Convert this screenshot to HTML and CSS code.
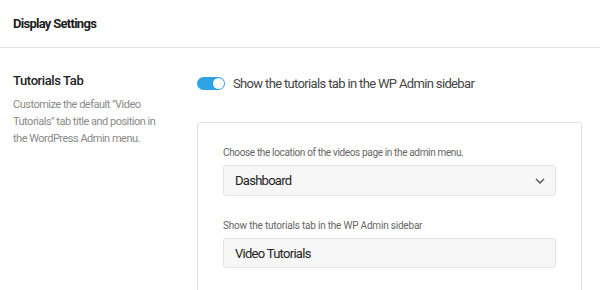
FILE: index.html
```html
<!DOCTYPE html>
<html lang="en">
<head>
  <meta charset="UTF-8" />
  <title>Display Settings</title>
  <link rel="stylesheet" href="styles.css">
</head>
<body>
  <div class="panel">
    <div class="panel-header">
      <h2>Display Settings</h2>
    </div>

    <div class="setting-row">
      <div class="setting-info">
        <h3>Tutorials Tab</h3>
        <p>Customize the default "Video Tutorials" tab title and position in the WordPress Admin menu.</p>
      </div>

      <div class="setting-body">
        <label class="toggle-row">
          <span class="toggle on"><span class="knob"></span></span>
          <span class="toggle-label">Show the tutorials tab in the WP Admin sidebar</span>
        </label>

        <div class="card">
          <div class="field">
            <label>Choose the location of the videos page in the admin menu.</label>
            <div class="select">
              <span>Dashboard</span>
              <svg class="chevron" width="10" height="6" viewBox="0 0 10 6">
                <path d="M1 1l4 4 4-4" fill="none" stroke="#555" stroke-width="1.4" />
              </svg>
            </div>
          </div>

          <div class="field">
            <label>Show the tutorials tab in the WP Admin sidebar</label>
            <input type="text" value="Video Tutorials" />
          </div>
        </div>
      </div>
    </div>
  </div>
</body>
</html>
```

FILE: styles.css
```css
:root {
  --blue: #2ea3e3;
  --border: #e3e3e3;
  --field-bg: #f7f7f7;
}

* {
  margin: 0;
  padding: 0;
  box-sizing: border-box;
}

body {
  font-family: Roboto, Arial, sans-serif;
  letter-spacing: -0.045em;
  background: #fff;
  color: #222;
  height: 100vh;
  overflow: hidden;
}

.panel-header {
  height: 48px;
  padding: 0 13px;
  display: flex;
  align-items: center;
  border-bottom: 1px solid var(--border);
}

h2 {
  font-size: 13px;
  font-weight: 700;
  color: #1d1d1d;
}

.setting-row {
  display: flex;
  padding: 24px 0 0 13px;
}

.setting-info {
  width: 184px;
  flex-shrink: 0;
}

h3 {
  font-size: 13px;
  font-weight: 500;
  letter-spacing: -0.03em;
  color: #222;
  line-height: 18px;
}

.setting-info p {
  margin-top: 6px;
  width: 147px;
  font-size: 11px;
  letter-spacing: -0.5px;
  line-height: 17px;
  color: #8a8a8a;
}

.setting-body {
  width: 385px;
}

.toggle-row {
  display: flex;
  align-items: center;
  gap: 8px;
  height: 16px;
  margin-top: 3px;
}

.toggle {
  width: 28px;
  height: 13px;
  border-radius: 7px;
  background: var(--blue);
  position: relative;
  flex-shrink: 0;
}

.knob {
  position: absolute;
  right: 1px;
  top: 1px;
  width: 11px;
  height: 11px;
  border-radius: 50%;
  background: #fff;
}

.toggle-label {
  font-size: 13px;
  letter-spacing: -0.65px;
  color: #444;
}

.card {
  margin-top: 31px;
  border: 1px solid var(--border);
  border-radius: 3px;
  padding: 23px 25px 30px;
  height: 190px;
}

.field + .field {
  margin-top: 23px;
}

.field label {
  display: block;
  font-size: 10px;
  letter-spacing: -0.35px;
  color: #666;
  line-height: 14px;
  margin-bottom: 5px;
}

.field + .field label {
  letter-spacing: -0.2px;
}

.select,
.field input {
  width: 100%;
  height: 31px;
  border: 1px solid var(--border);
  border-radius: 3px;
  background: var(--field-bg);
  padding: 0 11px;
  font-family: inherit;
  letter-spacing: inherit;
  font-size: 13px;
  color: #222;
  outline: none;
}

.field input {
  height: 30px;
}

.select {
  display: flex;
  align-items: center;
  justify-content: space-between;
}

.chevron {
  margin-right: -1px;
}
```
